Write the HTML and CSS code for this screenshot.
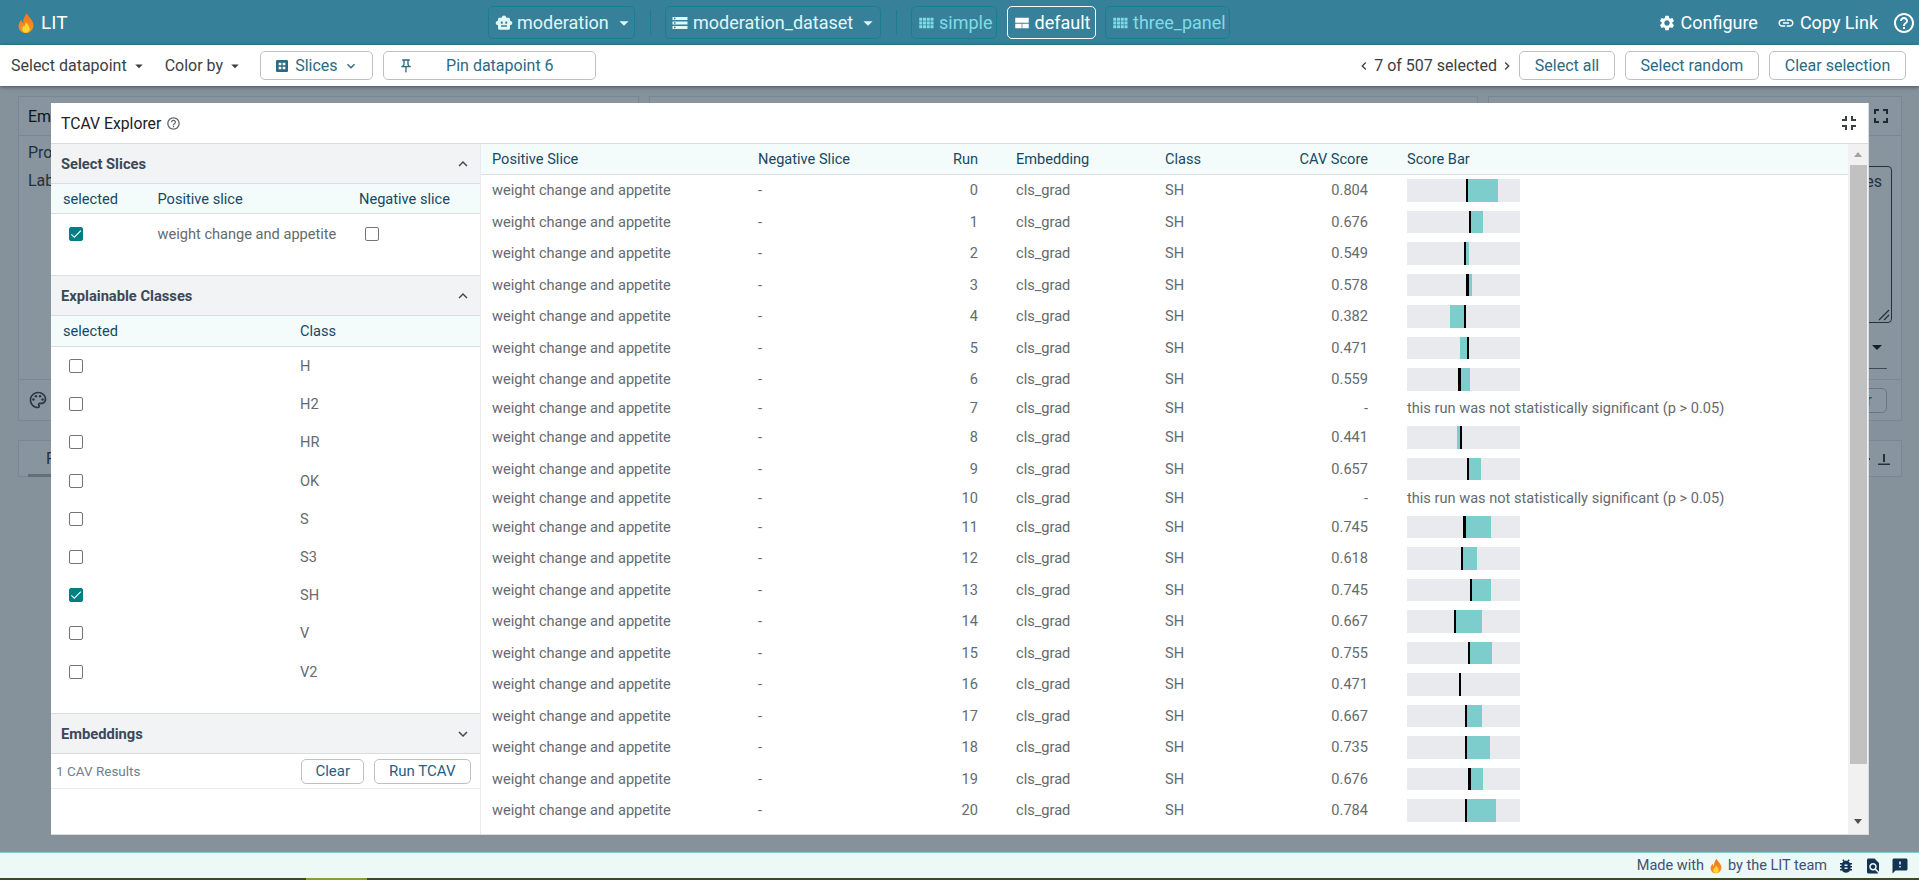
FILE: index.html
```html
<!DOCTYPE html>
<html lang="en">
<head>
    <meta charset="UTF-8">
    <meta name="viewport" content="width=device-width, initial-scale=1.0">
    <title>LIT</title>
    <link rel="stylesheet" href="styles.css">
</head>
<body>
    <svg class="defs" width="0" height="0">
        <defs>
            <linearGradient id="flame-grad" x1="0" y1="0" x2="0" y2="1">
                <stop offset="0" stop-color="#f4711f"/>
                <stop offset="1" stop-color="#f59a1b"/>
            </linearGradient>
            <symbol id="flame" viewBox="0 0 24 24">
                <path fill="url(#flame-grad)" d="M13 1c1 4 6 6.500 7 12 .8 5-3 10-8.200 10C6.800 23 3.500 19 4 14.500 4.300 11.800 5.800 10 7 8.500c.2 1.600.8 2.800 2 3.500C8.500 8 10.500 4 13 1z"/>
                <path fill="#fdd835" d="M12.300 11c.5 2.500 3.700 4 3.700 7.300 0 2.500-1.800 4.200-4.100 4.200S8 20.700 8 18.500c0-1.800 1-3 2-3.800.2.800.5 1.300 1 1.600-.2-1.800 0-3.700 1.300-5.300z"/>
            </symbol>
            <symbol id="help" viewBox="0 0 24 24"><path d="M11 18h2v-2h-2v2zm1-16C6.480 2 2 6.480 2 12s4.480 10 10 10 10-4.480 10-10S17.520 2 12 2zm0 18c-4.410 0-8-3.590-8-8s3.590-8 8-8 8 3.590 8 8-3.590 8-8 8zm0-14c-2.210 0-4 1.790-4 4h2c0-1.100.9-2 2-2s2 .9 2 2c0 2-3 1.750-3 5h2c0-2.250 3-2.500 3-5 0-2.210-1.790-4-4-4z"/></symbol>
            <symbol id="comfy" viewBox="0 0 24 24"><path d="M3 9h4V5H3v4zm0 5h4v-4H3v4zm5 0h4v-4H8v4zm5 0h4v-4h-4v4zM8 9h4V5H8v4zm5-4v4h4V5h-4zm5 9h4v-4h-4v4zM3 19h4v-4H3v4zm5 0h4v-4H8v4zm5 0h4v-4h-4v4zm5 0h4v-4h-4v4zm0-14v4h4V5h-4z"/></symbol>
            <symbol id="caret" viewBox="0 0 24 24"><path d="M7 10l5 5 5-5z"/></symbol>
            <symbol id="chev-up" viewBox="0 0 24 24"><path d="M12 8l-6 6 1.410 1.410L12 10.830l4.590 4.580L18 14z"/></symbol>
            <symbol id="chev-down" viewBox="0 0 24 24"><path d="M16.590 8.590L12 13.170 7.410 8.590 6 10l6 6 6-6z"/></symbol>
            <symbol id="tick" viewBox="0 0 24 24"><path d="M9 16.200L4.800 12l-1.400 1.400L9 19 21 7l-1.400-1.400z"/></symbol>
        </defs>
    </svg>

    <header class="topbar">
        <div class="brand">
            <svg class="flame-lg"><use href="#flame"/></svg>
            <span>LIT</span>
        </div>
        <nav class="nav-center">
            <button class="nav-btn model">
                <svg class="ico18" viewBox="0 0 24 24"><path d="M20 9V7c0-1.100-.9-2-2-2h-3c0-1.660-1.340-3-3-3S9 3.340 9 5H6c-1.100 0-2 .9-2 2v2c-1.660 0-3 1.340-3 3s1.340 3 3 3v4c0 1.100.9 2 2 2h12c1.100 0 2-.9 2-2v-4c1.660 0 3-1.340 3-3s-1.340-3-3-3zM7.500 11.500c0-.83.67-1.500 1.500-1.500s1.500.67 1.500 1.500S9.830 13 9 13s-1.500-.67-1.500-1.500zM16 17H8v-2h8v2zm-1-4c-.83 0-1.500-.67-1.500-1.500S14.170 10 15 10s1.500.67 1.500 1.500S15.830 13 15 13z"/></svg>
                moderation
                <svg class="ico22"><use href="#caret"/></svg>
            </button>
            <span class="nav-sep"></span>
            <button class="nav-btn dataset">
                <svg class="ico18" viewBox="0 0 24 24"><path d="M2 20h20v-4H2v4zm2-3h2v2H4v-2zM2 4v4h20V4H2zm4 3H4V5h2v2zm-4 7h20v-4H2v4zm2-3h2v2H4v-2z"/></svg>
                moderation_dataset
                <svg class="ico22"><use href="#caret"/></svg>
            </button>
            <span class="nav-sep"></span>
            <button class="nav-btn layout simple"><svg class="ico18"><use href="#comfy"/></svg>simple</button>
            <button class="nav-btn layout default active">
                <svg class="ico18" viewBox="0 0 24 24"><path d="M3 5h18v6.500H3zM3 13h8.500v6H3zM12.500 13H21v6h-8.500z"/></svg>
                default
            </button>
            <button class="nav-btn layout three"><svg class="ico18"><use href="#comfy"/></svg>three_panel</button>
        </nav>
        <div class="nav-right">
            <a class="nav-link configure">
                <svg class="ico18" viewBox="0 0 24 24"><path d="M19.140 12.940c.04-.3.06-.61.06-.94 0-.32-.02-.64-.07-.94l2.030-1.580c.18-.14.23-.41.12-.61l-1.920-3.320c-.12-.22-.37-.29-.59-.22l-2.390.96c-.5-.38-1.030-.7-1.620-.94l-.36-2.540c-.04-.24-.24-.41-.48-.41h-3.840c-.24 0-.43.17-.47.41l-.36 2.540c-.59.24-1.130.57-1.620.94l-2.390-.96c-.22-.08-.47 0-.59.22L2.740 8.870c-.12.21-.08.47.12.61l2.030 1.580c-.05.3-.09.63-.09.94s.02.64.07.94l-2.030 1.580c-.18.14-.23.41-.12.61l1.920 3.320c.12.22.37.29.59.22l2.390-.96c.5.38 1.030.7 1.620.94l.36 2.540c.05.24.24.41.48.41h3.840c.24 0 .44-.17.47-.41l.36-2.540c.59-.24 1.130-.56 1.620-.94l2.390.96c.22.08.47 0 .59-.22l1.920-3.320c.12-.22.07-.47-.12-.61l-2.010-1.580zM12 15.600c-1.980 0-3.600-1.620-3.600-3.600s1.620-3.600 3.600-3.600 3.600 1.620 3.600 3.600-1.620 3.600-3.600 3.600z"/></svg>
                Configure
            </a>
            <a class="nav-link">
                <svg class="ico18" viewBox="0 0 24 24"><path d="M3.900 12c0-1.710 1.390-3.100 3.100-3.100h4V7H7c-2.760 0-5 2.240-5 5s2.240 5 5 5h4v-1.900H7c-1.710 0-3.100-1.390-3.100-3.100zM8 13h8v-2H8v2zm9-6h-4v1.900h4c1.710 0 3.100 1.390 3.100 3.100s-1.390 3.100-3.100 3.100h-4V17h4c2.760 0 5-2.240 5-5s-2.240-5-5-5z"/></svg>
                Copy Link
            </a>
            <svg class="ico24 help-top"><use href="#help"/></svg>
        </div>
    </header>

    <div class="toolbar">
        <span class="tool-text">Select datapoint <svg class="ico18"><use href="#caret"/></svg></span>
        <span class="tool-text color-by">Color by <svg class="ico18"><use href="#caret"/></svg></span>
        <button class="btn slices">
            <svg class="ico16" viewBox="0 0 24 24"><path d="M19 3H5c-1.100 0-2 .9-2 2v14c0 1.100.9 2 2 2h14c1.100 0 2-.9 2-2V5c0-1.100-.9-2-2-2zm-8 14H7v-4h4v4zm0-6H7V7h4v4zm6 6h-4v-4h4v4zm0-6h-4V7h4v4z"/></svg>
            Slices
            <svg class="ico16"><use href="#chev-down"/></svg>
        </button>
        <button class="btn pin">
            <svg class="ico16" viewBox="0 0 24 24"><path d="M14 4v5c0 1.120.37 2.160 1 3H9c.65-.86 1-1.900 1-3V4h4m3-2H7c-.55 0-1 .45-1 1s.45 1 1 1h1v5c0 1.660-1.340 3-3 3v2h5.970v7l1 1 1-1v-7H19v-2c-1.660 0-3-1.340-3-3V4h1c.55 0 1-.45 1-1s-.45-1-1-1z"/></svg>
            <span class="pin-label">Pin datapoint 6</span>
        </button>
        <div class="tool-right">
            <span class="selected-count">
                <svg class="ico16" viewBox="0 0 24 24"><path d="M15.410 7.410L14 6l-6 6 6 6 1.410-1.410L10.830 12z"/></svg>
                7 of 507 selected
                <svg class="ico16" viewBox="0 0 24 24"><path d="M10 6L8.590 7.410 13.170 12l-4.580 4.590L10 18l6-6z"/></svg>
            </span>
            <button class="btn sel-all">Select all</button>
            <button class="btn sel-random">Select random</button>
            <button class="btn sel-clear">Clear selection</button>
        </div>
    </div>

    <main class="workspace">
        <div class="panel-row">
            <section class="panel panel-left">
                <div class="panel-head">Em</div>
                <div class="panel-body">
                    <div>Pro</div>
                    <div class="label-line">Lab</div>
                </div>
                <div class="panel-foot">
                    <svg class="ico20" viewBox="0 0 24 24"><path d="M12 22C6.490 22 2 17.510 2 12S6.490 2 12 2s10 4.040 10 9c0 3.310-2.690 6-6 6h-1.770c-.28 0-.5.22-.5.5 0 .12.05.23.13.33.41.47.64 1.060.64 1.670A2.500 2.500 0 0 1 12 22zm0-18c-4.410 0-8 3.590-8 8s3.590 8 8 8c.28 0 .5-.22.5-.5a.54.54 0 0 0-.14-.35c-.41-.46-.63-1.050-.63-1.650a2.500 2.500 0 0 1 2.500-2.500H16c2.210 0 4-1.790 4-4 0-3.860-3.590-7-8-7z"/><circle cx="6.500" cy="11.500" r="1.500"/><circle cx="9.500" cy="7.500" r="1.500"/><circle cx="14.500" cy="7.500" r="1.500"/><circle cx="17.500" cy="11.500" r="1.500"/></svg>
                    <span class="foot-mark"></span>
                </div>
            </section>
            <section class="panel panel-mid"></section>
            <section class="panel panel-right">
                <div class="panel-head head-end">
                    <svg class="ico24" viewBox="0 0 24 24"><path d="M7 14H5v5h5v-2H7v-3zm-2-4h2V7h3V5H5v5zm12 7h-3v2h5v-5h-2v3zM14 5v2h3v3h2V5h-5z"/></svg>
                </div>
                <div class="panel-body right-body">
                    <div class="fake-area">
                        <span>es</span>
                        <svg class="resize-grip" width="12" height="12" viewBox="0 0 12 12"><path d="M1 11L11 1M6 11l5-5" fill="none" stroke="#333" stroke-width="1.300"/></svg>
                    </div>
                    <div class="fake-select"><svg class="ico24"><use href="#caret"/></svg></div>
                </div>
                <div class="panel-foot foot-end"><button class="btn ghost">r</button></div>
            </section>
        </div>
        <section class="panel tab-panel">
            <span class="tab-label">F</span>
            <span class="tab-tools">
                <span class="tab-dot"></span>
                <svg class="ico16" viewBox="0 0 16 16"><path d="M7 3h2v8H7zM2 12.500h12v1.500H2z"/></svg>
            </span>
        </section>

        <div class="scrim"></div>

        <div class="modal">
            <div class="modal-head">
                <span class="modal-title">TCAV Explorer</span>
                <svg class="help-small"><use href="#help"/></svg>
                <svg class="ico24 collapse" viewBox="0 0 24 24"><path d="M5 16h3v3h2v-5H5v2zm3-8H5v2h5V5H8v3zm6 11h2v-3h3v-2h-5v5zm2-11V5h-2v5h5V8h-3z"/></svg>
            </div>
            <div class="modal-body">
                <aside class="sidebar">
                    <div class="section-head">Select Slices <svg class="ico18"><use href="#chev-up"/></svg></div>
                    <div class="slices-body">
                        <div class="side-row side-row-head slices-grid">
                            <span>selected</span><span>Positive slice</span><span>Negative slice</span>
                        </div>
                        <div class="side-row slices-grid slice-row">
                            <span class="check on"><svg><use href="#tick"/></svg></span>
                            <span>weight change and appetite</span>
                            <span class="check neg"></span>
                        </div>
                    </div>
                    <div class="section-head">Explainable Classes <svg class="ico18"><use href="#chev-up"/></svg></div>
                    <div class="classes-body">
                        <div class="side-row side-row-head classes-grid"><span>selected</span><span>Class</span></div>
                        <div class="side-row classes-grid"><span class="check"></span><span>H</span></div>
                        <div class="side-row classes-grid"><span class="check"></span><span>H2</span></div>
                        <div class="side-row classes-grid"><span class="check"></span><span>HR</span></div>
                        <div class="side-row classes-grid"><span class="check"></span><span>OK</span></div>
                        <div class="side-row classes-grid"><span class="check"></span><span>S</span></div>
                        <div class="side-row classes-grid"><span class="check"></span><span>S3</span></div>
                        <div class="side-row classes-grid"><span class="check on"><svg><use href="#tick"/></svg></span><span>SH</span></div>
                        <div class="side-row classes-grid"><span class="check"></span><span>V</span></div>
                        <div class="side-row classes-grid"><span class="check"></span><span>V2</span></div>
                    </div>
                    <div class="section-head">Embeddings <svg class="ico18"><use href="#chev-down"/></svg></div>
                    <div class="run-row">
                        <span class="run-count">1 CAV Results</span>
                        <button class="btn small clear-btn">Clear</button>
                        <button class="btn small">Run TCAV</button>
                    </div>
                </aside>

                <div class="results">
                    <div class="res-row res-head">
                        <span>Positive Slice</span><span>Negative Slice</span><span class="num">Run</span><span class="emb">Embedding</span><span>Class</span><span class="num">CAV Score</span><span class="score">Score Bar</span>
                    </div>
                    <div class="res-row"><span>weight change and appetite</span><span>-</span><span class="num">0</span><span class="emb">cls_grad</span><span>SH</span><span class="num">0.804</span><span class="score"><div class="bar"><i class="fill" style="left:59px;width:32px"></i><i class="mean" style="left:59px;width:2px"></i></div></span></div>
                    <div class="res-row"><span>weight change and appetite</span><span>-</span><span class="num">1</span><span class="emb">cls_grad</span><span>SH</span><span class="num">0.676</span><span class="score"><div class="bar"><i class="fill" style="left:62px;width:14px"></i><i class="mean" style="left:62px;width:2px"></i></div></span></div>
                    <div class="res-row"><span>weight change and appetite</span><span>-</span><span class="num">2</span><span class="emb">cls_grad</span><span>SH</span><span class="num">0.549</span><span class="score"><div class="bar"><i class="fill" style="left:57px;width:5px"></i><i class="mean" style="left:57px;width:2px"></i></div></span></div>
                    <div class="res-row"><span>weight change and appetite</span><span>-</span><span class="num">3</span><span class="emb">cls_grad</span><span>SH</span><span class="num">0.578</span><span class="score"><div class="bar"><i class="fill" style="left:59px;width:6px"></i><i class="mean" style="left:59px;width:3px"></i></div></span></div>
                    <div class="res-row"><span>weight change and appetite</span><span>-</span><span class="num">4</span><span class="emb">cls_grad</span><span>SH</span><span class="num">0.382</span><span class="score"><div class="bar"><i class="fill" style="left:43px;width:14px"></i><i class="mean" style="left:57px;width:2px"></i></div></span></div>
                    <div class="res-row"><span>weight change and appetite</span><span>-</span><span class="num">5</span><span class="emb">cls_grad</span><span>SH</span><span class="num">0.471</span><span class="score"><div class="bar"><i class="fill" style="left:53px;width:7px"></i><i class="mean" style="left:60px;width:2px"></i></div></span></div>
                    <div class="res-row"><span>weight change and appetite</span><span>-</span><span class="num">6</span><span class="emb">cls_grad</span><span>SH</span><span class="num">0.559</span><span class="score"><div class="bar"><i class="fill" style="left:51px;width:12px"></i><i class="mean" style="left:51px;width:3px"></i></div></span></div>
                    <div class="res-row res-text"><span>weight change and appetite</span><span>-</span><span class="num">7</span><span class="emb">cls_grad</span><span>SH</span><span class="num">-</span><span class="score">this run was not statistically significant (p &gt; 0.05)</span></div>
                    <div class="res-row"><span>weight change and appetite</span><span>-</span><span class="num">8</span><span class="emb">cls_grad</span><span>SH</span><span class="num">0.441</span><span class="score"><div class="bar"><i class="fill" style="left:50px;width:3px"></i><i class="mean" style="left:53px;width:2px"></i></div></span></div>
                    <div class="res-row"><span>weight change and appetite</span><span>-</span><span class="num">9</span><span class="emb">cls_grad</span><span>SH</span><span class="num">0.657</span><span class="score"><div class="bar"><i class="fill" style="left:60px;width:14px"></i><i class="mean" style="left:60px;width:2px"></i></div></span></div>
                    <div class="res-row res-text"><span>weight change and appetite</span><span>-</span><span class="num">10</span><span class="emb">cls_grad</span><span>SH</span><span class="num">-</span><span class="score">this run was not statistically significant (p &gt; 0.05)</span></div>
                    <div class="res-row"><span>weight change and appetite</span><span>-</span><span class="num">11</span><span class="emb">cls_grad</span><span>SH</span><span class="num">0.745</span><span class="score"><div class="bar"><i class="fill" style="left:56px;width:28px"></i><i class="mean" style="left:56px;width:3px"></i></div></span></div>
                    <div class="res-row"><span>weight change and appetite</span><span>-</span><span class="num">12</span><span class="emb">cls_grad</span><span>SH</span><span class="num">0.618</span><span class="score"><div class="bar"><i class="fill" style="left:54px;width:16px"></i><i class="mean" style="left:54px;width:2px"></i></div></span></div>
                    <div class="res-row"><span>weight change and appetite</span><span>-</span><span class="num">13</span><span class="emb">cls_grad</span><span>SH</span><span class="num">0.745</span><span class="score"><div class="bar"><i class="fill" style="left:63px;width:21px"></i><i class="mean" style="left:63px;width:2px"></i></div></span></div>
                    <div class="res-row"><span>weight change and appetite</span><span>-</span><span class="num">14</span><span class="emb">cls_grad</span><span>SH</span><span class="num">0.667</span><span class="score"><div class="bar"><i class="fill" style="left:47px;width:28px"></i><i class="mean" style="left:47px;width:2px"></i></div></span></div>
                    <div class="res-row"><span>weight change and appetite</span><span>-</span><span class="num">15</span><span class="emb">cls_grad</span><span>SH</span><span class="num">0.755</span><span class="score"><div class="bar"><i class="fill" style="left:61px;width:24px"></i><i class="mean" style="left:61px;width:2px"></i></div></span></div>
                    <div class="res-row"><span>weight change and appetite</span><span>-</span><span class="num">16</span><span class="emb">cls_grad</span><span>SH</span><span class="num">0.471</span><span class="score"><div class="bar"><i class="mean" style="left:52px;width:2px"></i></div></span></div>
                    <div class="res-row"><span>weight change and appetite</span><span>-</span><span class="num">17</span><span class="emb">cls_grad</span><span>SH</span><span class="num">0.667</span><span class="score"><div class="bar"><i class="fill" style="left:58px;width:17px"></i><i class="mean" style="left:58px;width:2px"></i></div></span></div>
                    <div class="res-row"><span>weight change and appetite</span><span>-</span><span class="num">18</span><span class="emb">cls_grad</span><span>SH</span><span class="num">0.735</span><span class="score"><div class="bar"><i class="fill" style="left:58px;width:25px"></i><i class="mean" style="left:58px;width:2px"></i></div></span></div>
                    <div class="res-row"><span>weight change and appetite</span><span>-</span><span class="num">19</span><span class="emb">cls_grad</span><span>SH</span><span class="num">0.676</span><span class="score"><div class="bar"><i class="fill" style="left:61px;width:15px"></i><i class="mean" style="left:61px;width:3px"></i></div></span></div>
                    <div class="res-row"><span>weight change and appetite</span><span>-</span><span class="num">20</span><span class="emb">cls_grad</span><span>SH</span><span class="num">0.784</span><span class="score"><div class="bar"><i class="fill" style="left:58px;width:31px"></i><i class="mean" style="left:58px;width:2px"></i></div></span></div>
                </div>

                <div class="scrollbar">
                    <span class="arrow up"></span>
                    <span class="thumb"></span>
                    <span class="track-rest"></span>
                    <span class="arrow down"></span>
                </div>
            </div>
        </div>
    </main>

    <footer class="footer">
        <span class="made-with">Made with <svg class="flame-sm"><use href="#flame"/></svg> by the LIT team</span>
        <svg class="ico18" viewBox="0 0 24 24"><path d="M20 8h-2.810c-.45-.78-1.070-1.450-1.820-1.960L17 4.410 15.590 3l-2.170 2.170C12.960 5.060 12.490 5 12 5c-.49 0-.96.06-1.410.17L8.410 3 7 4.410l1.620 1.630C7.880 6.550 7.260 7.220 6.810 8H4v2h2.090c-.05.33-.09.66-.09 1v1H4v2h2v1c0 .34.04.67.09 1H4v2h2.810c1.040 1.790 2.970 3 5.190 3s4.150-1.210 5.190-3H20v-2h-2.090c.05-.33.09-.66.09-1v-1h2v-2h-2v-1c0-.34-.04-.67-.09-1H20V8zm-6 8h-4v-2h4v2zm0-4h-4v-2h4v2z"/></svg>
        <svg class="ico18" viewBox="0 0 24 24"><path d="M20 19.590V8l-6-6H6c-1.100 0-1.990.9-1.990 2L4 20c0 1.100.89 2 1.990 2H18c.45 0 .85-.15 1.190-.4l-4.430-4.430c-.8.52-1.740.83-2.760.83-2.760 0-5-2.240-5-5s2.240-5 5-5 5 2.240 5 5c0 1.020-.31 1.960-.83 2.750L20 19.590zM9 13c0 1.660 1.340 3 3 3s3-1.340 3-3-1.340-3-3-3-3 1.340-3 3z"/></svg>
        <svg class="ico18" viewBox="0 0 24 24"><path d="M20 2H4c-1.100 0-1.990.9-1.990 2L2 22l4-4h14c1.100 0 2-.9 2-2V4c0-1.100-.9-2-2-2zm-7 12h-2v-2h2v2zm0-4h-2V6h2v4z"/></svg>
    </footer>
    <div class="edge-strip"></div>
</body>
</html>
```

FILE: styles.css
```css
* {
    box-sizing: border-box;
}

html, body {
    margin: 0;
    height: 880px;
    overflow: hidden;
}

body {
    display: flex;
    flex-direction: column;
    font-family: Roboto, "Noto Sans", sans-serif;
    font-size: 16px;
    color: #3c4043;
    background: #f5f7f5;
}

button {
    font-family: inherit;
}

svg {
    fill: currentColor;
    flex: none;
}

.defs {
    position: absolute;
}

.ico16 { width: 16px; height: 16px; }
.ico18 { width: 18px; height: 18px; }
.ico20 { width: 20px; height: 20px; }
.ico22 { width: 22px; height: 22px; }
.ico24 { width: 24px; height: 24px; }

/* Top bar */
.topbar {
    height: 45px;
    flex: none;
    display: grid;
    grid-template-columns: 488px 1fr auto;
    align-items: center;
    background: #37809a;
    color: #fff;
    padding-right: 3px;
}

.brand {
    display: flex;
    align-items: center;
    font-size: 19px;
    padding-left: 15px;
    gap: 4px;
}

.flame-lg {
    width: 22px;
    height: 22px;
}

.nav-center {
    display: flex;
    align-items: center;
}

.nav-btn {
    height: 33px;
    display: flex;
    align-items: center;
    gap: 4px;
    padding: 0 0 0 6px;
    font-size: 18px;
    background: transparent;
    color: #e0f7f7;
    border: 1px solid #16808d;
    border-radius: 5px;
}

.nav-btn.model { width: 147px; }
.nav-btn.dataset { width: 216px; padding-left: 5px; }

.nav-btn.layout { color: #7fdce6; margin-right: 9.500px; padding-left: 5px; }
.nav-btn.simple { width: 86px; }
.nav-btn.default { width: 89px; }
.nav-btn.three { width: 125px; }
.nav-btn.active { color: #fff; border-color: #fff; }

.nav-sep {
    width: 1px;
    height: 25px;
    margin: 0 14.500px;
    background: #16808d;
}

.nav-right {
    display: flex;
    align-items: center;
    font-size: 18px;
}

.nav-link {
    display: flex;
    align-items: center;
    gap: 5px;
    margin-right: 20px;
}

.configure {
    gap: 4px;
    margin-right: 19px;
}

.help-top { margin-left: -6px; }

/* Toolbar */
.toolbar {
    height: 41px;
    flex: none;
    display: flex;
    align-items: center;
    background: #fff;
    padding: 0 13px 0 11px;
    position: relative;
    z-index: 2;
    box-shadow: 0 1px 4px rgba(0, 0, 0, 0.45);
}

.tool-text {
    display: flex;
    align-items: center;
    gap: 3px;
    color: #3c4043;
}

.color-by { margin-left: 17px; }

.btn {
    height: 29px;
    padding: 0 14px;
    font-size: 16px;
    color: #2a6a85;
    background: #fff;
    border: 1px solid #bdc1c6;
    border-radius: 5px;
    display: inline-flex;
    align-items: center;
    justify-content: center;
}

.slices {
    margin-left: 15.500px;
    width: 113.500px;
    gap: 5px;
}

.pin {
    margin-left: 10px;
    width: 213px;
    padding-left: 14px;
    justify-content: flex-start;
}

.pin-label { margin-left: 32px; }

.tool-right {
    margin-left: auto;
    display: flex;
    align-items: center;
    gap: 10px;
}

.selected-count {
    display: flex;
    align-items: center;
    gap: 2px;
    margin-right: -6px;
}

.sel-all { width: 96px; padding: 0; }
.sel-random { width: 134px; padding: 0; }
.sel-clear { width: 137px; padding: 0; }

/* Page underneath the dialog */
.workspace {
    flex: 1;
    position: relative;
    padding: 10px 17px 0 18px;
}

.panel-row {
    display: flex;
    gap: 10px;
    height: 325px;
}

.panel {
    background: #fbfcfc;
    border: 1px solid #dfe2e5;
    display: flex;
    flex-direction: column;
}

.panel-left { width: 621px; }
.panel-mid { width: 829px; }
.panel-right { width: 414px; }

.panel-head {
    height: 39px;
    flex: none;
    display: flex;
    align-items: center;
    padding: 0 9px;
    border-bottom: 1px solid #dfe2e5;
    color: #000;
}

.head-end { justify-content: flex-end; color: #222; padding-right: 8px; }

.panel-body {
    flex: 1;
    padding: 7px 9px;
    font-size: 16px;
    color: #333;
}

.label-line { margin-top: 9px; }

.panel-foot {
    height: 41px;
    flex: none;
    display: flex;
    align-items: center;
    padding: 0 9px;
    gap: 3px;
    border-top: 1px solid #dfe2e5;
}

.foot-mark {
    width: 2px;
    height: 9px;
    background: #c6730f;
}

.foot-end { justify-content: flex-end; padding-right: 14px; }

.ghost {
    height: 25px;
    width: 60px;
    justify-content: flex-end;
    color: #1f6e99;
}

.right-body {
    padding: 30px 9px 0;
    display: flex;
    flex-direction: column;
    align-items: flex-end;
}

.fake-area {
    width: 380px;
    height: 157px;
    border: 1px solid #333;
    border-radius: 4px;
    text-align: right;
    padding: 5px 9px;
    position: relative;
}

.resize-grip {
    position: absolute;
    right: 1px;
    bottom: 1px;
}

.fake-select {
    width: 380px;
    height: 46px;
    margin-right: 5px;
    display: flex;
    justify-content: flex-end;
    align-items: flex-end;
    padding: 0 0 9px;
    color: #111;
    border-bottom: 1px solid #666;
}

.fake-select .ico24 { margin-right: -2px; }

.tab-panel {
    height: 37px;
    margin-top: 19px;
    flex-direction: row;
    align-items: center;
    justify-content: space-between;
    padding: 0 9px 0 27px;
    position: relative;
    color: #333;
}

.tab-tools {
    display: flex;
    align-items: center;
    gap: 6px;
}

.tab-dot {
    width: 4px;
    height: 2px;
    background: #333;
}

.tab-panel::after {
    content: "";
    position: absolute;
    left: 9px;
    bottom: -1px;
    width: 120px;
    height: 3px;
    background: #aab2b8;
}

/* Dialog */
.scrim {
    position: absolute;
    inset: 0;
    background: rgba(21, 45, 65, 0.5);
}

.modal {
    position: absolute;
    left: 51px;
    top: 17px;
    width: 1818px;
    height: 732px;
    display: flex;
    flex-direction: column;
    background: #fff;
    border-bottom: 1px solid #dadce0;
    border-right: 1px solid #dadce0;
}

.modal-head {
    height: 41px;
    flex: none;
    display: flex;
    align-items: center;
    padding: 0 10px;
    font-size: 15.750px;
    border-bottom: 1px solid #dadce0;
    color: #202124;
}

.help-small {
    width: 15px;
    height: 15px;
    margin-left: 5px;
    color: #5f6368;
}

.collapse { margin-left: auto; margin-right: -3px; color: #3c4043; }

.modal-body {
    flex: 1;
    min-height: 0;
    display: flex;
}

.sidebar {
    width: 430px;
    flex: none;
    border-right: 1px solid #e8eaed;
    font-size: 14.600px;
    color: #666a6e;
}

.section-head {
    height: 41px;
    display: flex;
    align-items: center;
    justify-content: space-between;
    padding: 0 8px 0 10px;
    font-size: 14.700px;
    font-weight: 700;
    color: #3c4858;
    background: #f1f3f4;
    border-top: 1px solid #dadce0;
    border-bottom: 1px solid #dadce0;
}

.sidebar > .section-head:first-child {
    height: 40px;
    border-top: none;
}

.slices-body { height: 91px; }
.classes-body { height: 397px; }

.side-row {
    height: 38.200px;
    display: grid;
    align-items: center;
    padding-left: 12px;
}

.slice-row { height: 40px; }

.side-row-head {
    height: 30px;
    background: #f3fcfb;
    border-bottom: 1px solid #dadce0;
    color: #174863;
}

.classes-body .side-row-head { height: 31px; }

.slices-grid { grid-template-columns: 94.500px 201.500px 1fr; }
.classes-grid { grid-template-columns: 237px 1fr; }

.check {
    width: 14px;
    height: 14px;
    margin-left: 6px;
    border: 1.500px solid #757575;
    border-radius: 2px;
    display: block;
}

.check.on {
    background: #007f85;
    border-color: #007f85;
    color: #fff;
}

.check svg {
    display: block;
    width: 14px;
    height: 14px;
    margin: -1.500px;
}

.run-row {
    height: 35px;
    display: flex;
    align-items: center;
    gap: 9.500px;
    padding: 0 9px 0 5px;
    border-bottom: 1px solid #e8eaed;
}

.run-count {
    margin-right: auto;
    font-size: 13.500px;
    color: #70808f;
}

.btn.small {
    height: 25px;
    padding: 0 14.500px;
    font-size: 15px;
    color: #1f5f85;
}

.btn.clear-btn {
    padding: 0 13px;
}

/* Results table */
.results {
    width: 1367px;
    flex: none;
    font-size: 14.600px;
    color: #666a6e;
}

.res-row {
    height: 31.500px;
    display: grid;
    grid-template-columns: 266px 158px 62px 187px 100px 103px 1fr;
    align-items: center;
    padding-left: 11px;
    white-space: nowrap;
}

.res-head {
    height: 30.500px;
    background: #f3fcfb;
    color: #174863;
    border-bottom: 1px solid #dadce0;
}

.res-text {
    height: 26.500px;
}

.num { text-align: right; }
.emb { padding-left: 38px; }
.score { padding-left: 39px; }

.bar {
    position: relative;
    width: 113px;
    height: 22.500px;
    background: #e8eaed;
}

.fill, .mean {
    position: absolute;
    top: 0;
    bottom: 0;
}

.fill { background: #7dcdcd; }
.mean { background: #000; }

/* Scrollbar */
.scrollbar {
    flex: 1;
    display: flex;
    flex-direction: column;
    align-items: center;
    background: #f1f1f1;
}

.arrow {
    width: 100%;
    height: 21px;
    flex: none;
    position: relative;
}

.arrow::after {
    content: "";
    position: absolute;
    left: 50%;
    margin-left: -4.500px;
    border-left: 4.500px solid transparent;
    border-right: 4.500px solid transparent;
}

.arrow.up::after {
    top: 8px;
    border-bottom: 5px solid #a3a3a3;
}

.arrow.down::after {
    top: 6px;
    border-top: 5px solid #505050;
}

.thumb {
    width: 17px;
    height: 599px;
    flex: none;
    background: #c1c1c1;
}

.track-rest { flex: 1; }

/* Footer */
.footer {
    height: 26px;
    flex: none;
    display: flex;
    align-items: center;
    justify-content: flex-end;
    gap: 9px;
    padding-right: 10px;
    background: #ecf9f7;
    border-top: 1px solid #7dcdd4;
    color: #133352;
    font-size: 14.500px;
}

.made-with {
    display: flex;
    align-items: center;
    gap: 4px;
    color: #3f5272;
    margin-right: 1px;
}

.flame-sm {
    width: 16px;
    height: 16px;
}

.edge-strip {
    height: 2px;
    flex: none;
    background: linear-gradient(to right, #3c4a20 306px, #8a9a40 306px, #8a9a40 367px, #3c4a20 367px);
}
```
